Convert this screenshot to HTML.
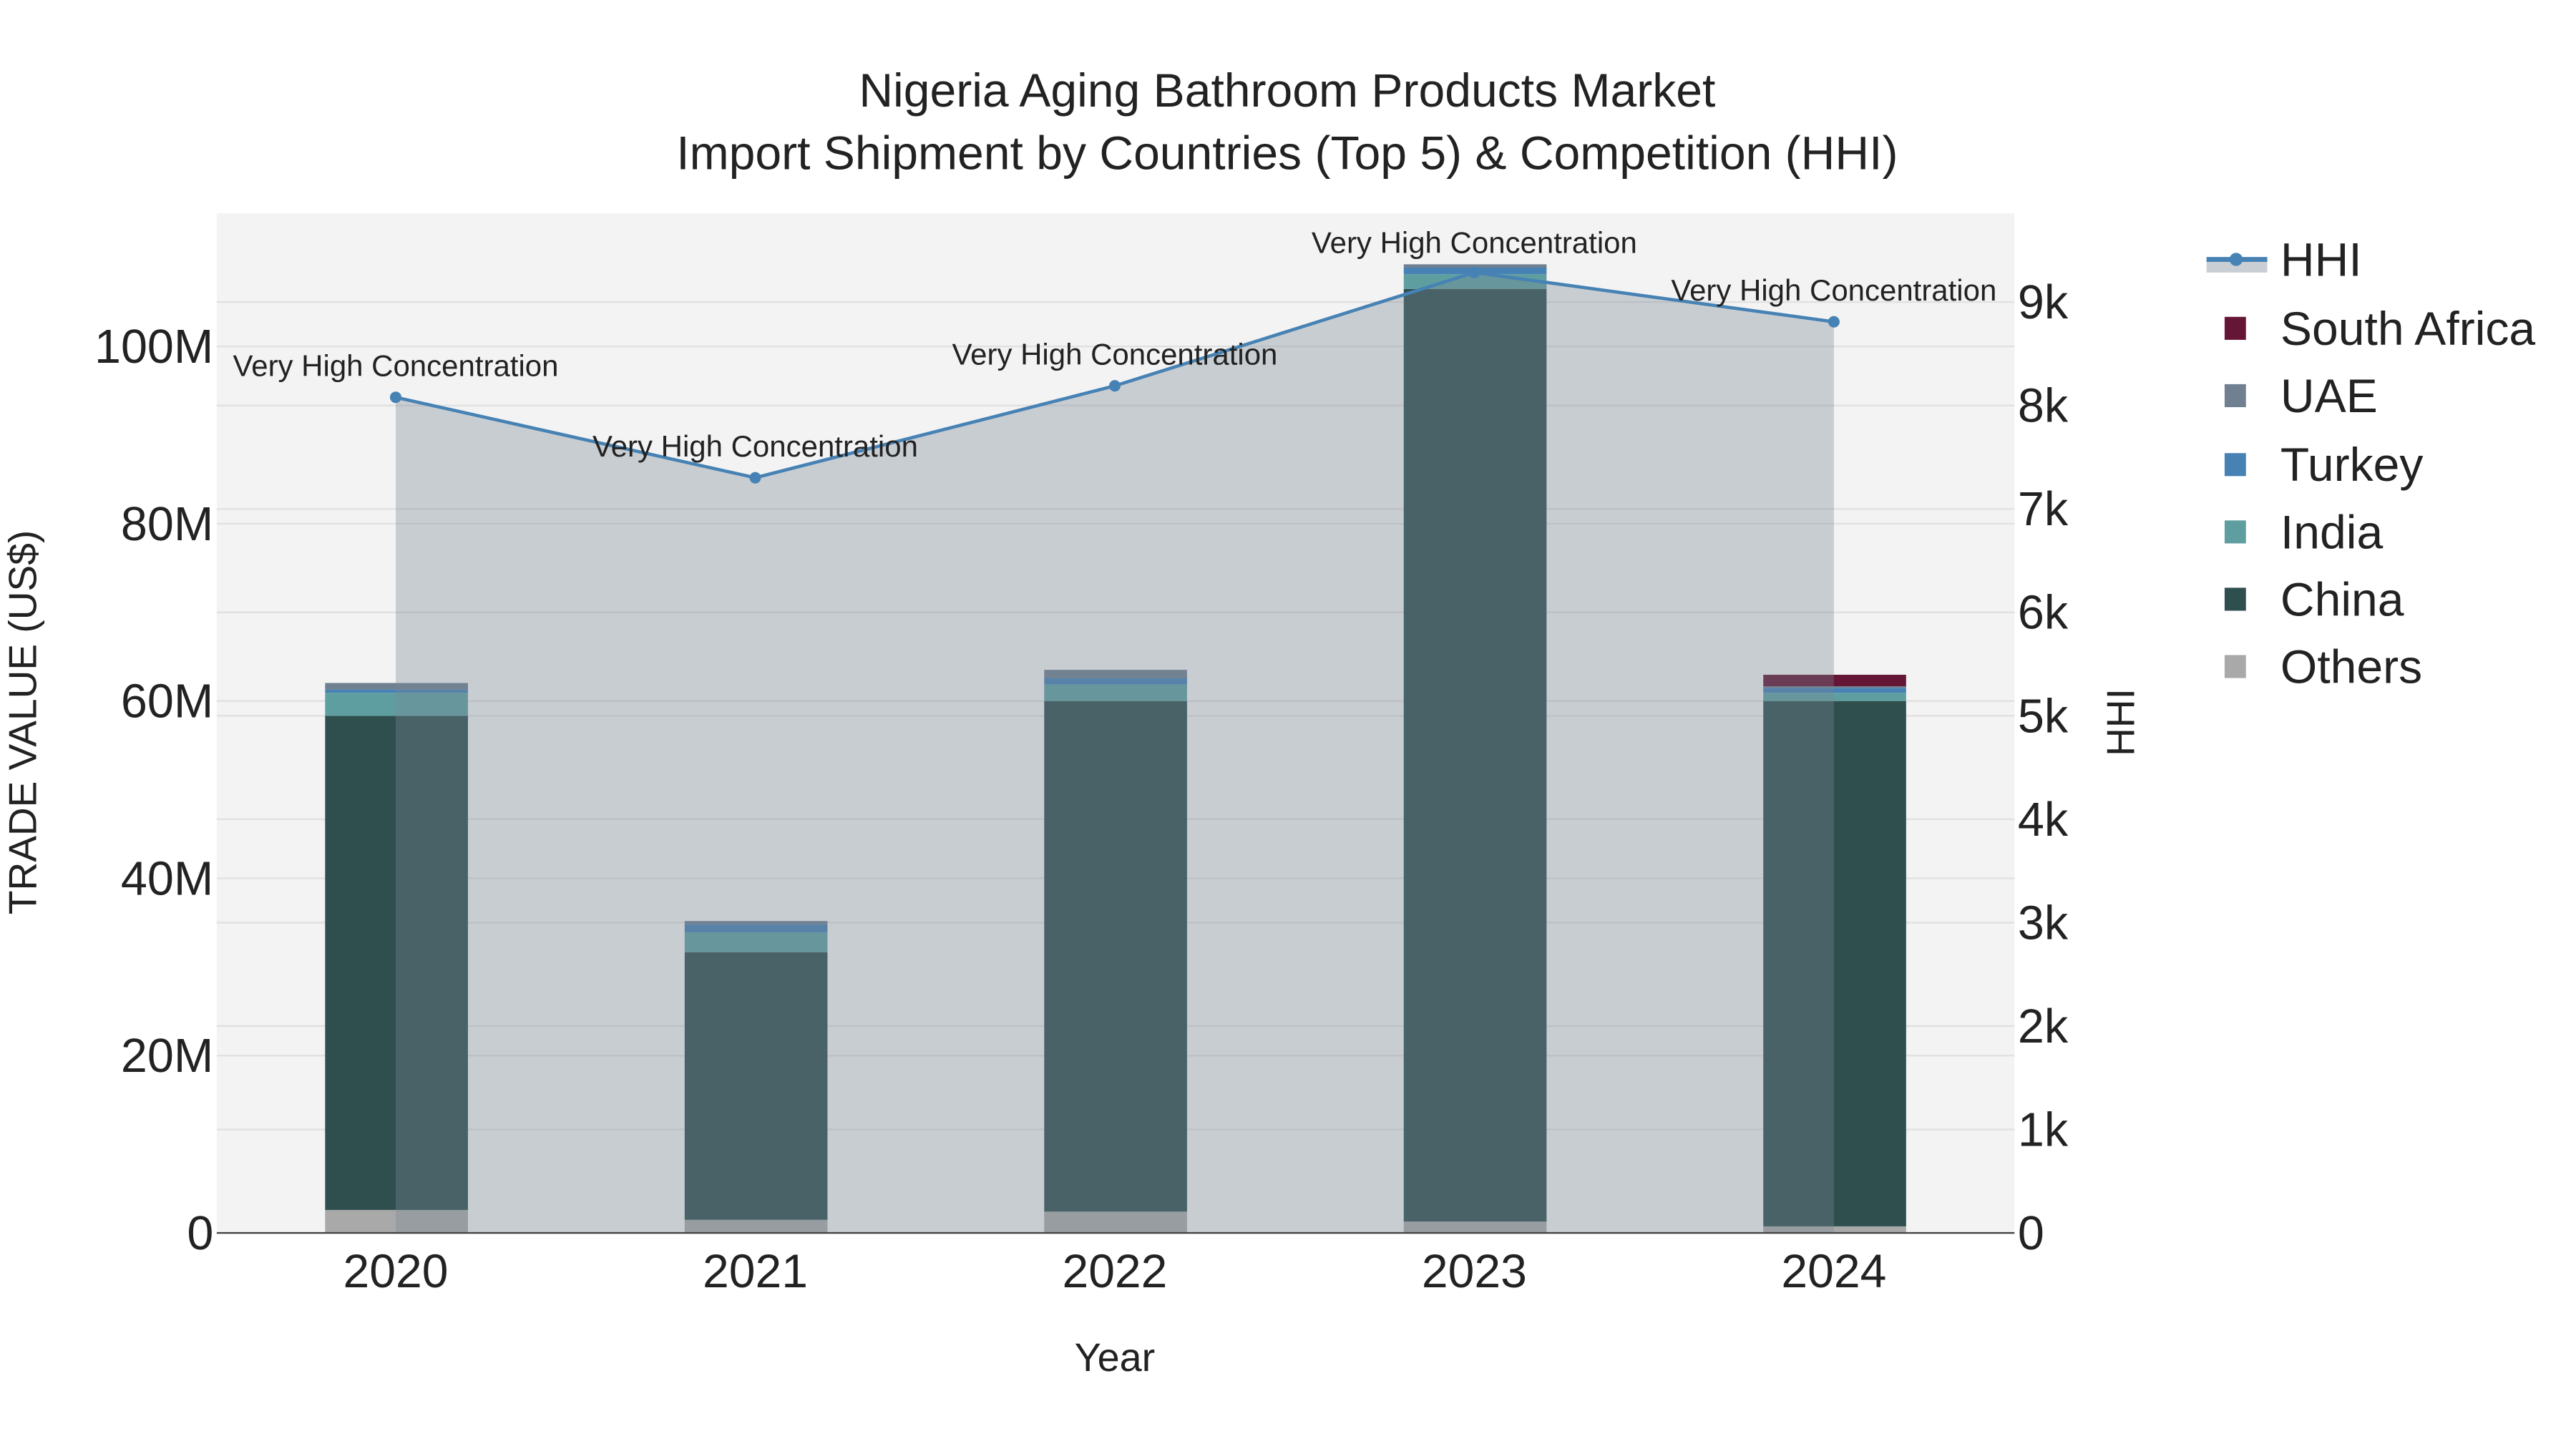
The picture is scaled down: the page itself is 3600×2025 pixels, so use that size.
<!DOCTYPE html>
<html><head><meta charset="utf-8"><style>html,body{margin:0;padding:0;background:#fff}svg{display:block}text{font-family:"Liberation Sans",sans-serif;fill:#222}</style></head><body>
<svg width="3600" height="2025" viewBox="0 0 1569 882.6" xmlns="http://www.w3.org/2000/svg">
<rect width="1569" height="882.6" fill="#fff"/>
<rect x="132" y="130" width="1095" height="621" fill="#f3f3f3"/>
<g stroke="#e0e0e0" stroke-width="1">
<line x1="132" x2="1227" y1="643" y2="643"/><line x1="132" x2="1227" y1="535" y2="535"/><line x1="132" x2="1227" y1="427" y2="427"/><line x1="132" x2="1227" y1="319" y2="319"/><line x1="132" x2="1227" y1="211" y2="211"/>
<line x1="132" x2="1227" y1="688" y2="688"/><line x1="132" x2="1227" y1="625" y2="625"/><line x1="132" x2="1227" y1="562" y2="562"/><line x1="132" x2="1227" y1="499" y2="499"/><line x1="132" x2="1227" y1="436" y2="436"/><line x1="132" x2="1227" y1="373" y2="373"/><line x1="132" x2="1227" y1="310" y2="310"/><line x1="132" x2="1227" y1="247" y2="247"/><line x1="132" x2="1227" y1="184" y2="184"/>
</g>
<g>
<rect x="198" y="737" width="87" height="14" fill="#a9a9a9"/><rect x="198" y="436" width="87" height="301" fill="#2f4f4f"/><rect x="198" y="422" width="87" height="14" fill="#5f9ea0"/><rect x="198" y="420" width="87" height="2" fill="#4682b4"/><rect x="198" y="416" width="87" height="4" fill="#708090"/>
<rect x="417" y="743" width="87" height="8" fill="#a9a9a9"/><rect x="417" y="580" width="87" height="163" fill="#2f4f4f"/><rect x="417" y="568" width="87" height="12" fill="#5f9ea0"/><rect x="417" y="563" width="87" height="5" fill="#4682b4"/><rect x="417" y="561" width="87" height="2" fill="#708090"/>
<rect x="636" y="738" width="87" height="13" fill="#a9a9a9"/><rect x="636" y="427" width="87" height="311" fill="#2f4f4f"/><rect x="636" y="417" width="87" height="10" fill="#5f9ea0"/><rect x="636" y="413" width="87" height="4" fill="#4682b4"/><rect x="636" y="408" width="87" height="5" fill="#708090"/>
<rect x="855" y="744" width="87" height="7" fill="#a9a9a9"/><rect x="855" y="176" width="87" height="568" fill="#2f4f4f"/><rect x="855" y="167" width="87" height="9" fill="#5f9ea0"/><rect x="855" y="163" width="87" height="4" fill="#4682b4"/><rect x="855" y="161" width="87" height="2" fill="#708090"/>
<rect x="1074" y="747" width="87" height="4" fill="#a9a9a9"/><rect x="1074" y="427" width="87" height="320" fill="#2f4f4f"/><rect x="1074" y="422" width="87" height="5" fill="#5f9ea0"/><rect x="1074" y="419" width="87" height="3" fill="#4682b4"/><rect x="1074" y="418" width="87" height="1" fill="#708090"/><rect x="1074" y="411" width="87" height="7" fill="#651535"/>
</g>
<polygon points="241,751 241,242 460,291 679,235 898,166 1117,196 1117,751" fill="rgba(120,134,148,0.35)"/>
<line x1="132" x2="1227" y1="751" y2="751" stroke="#444" stroke-width="1"/>
<polyline points="241,242 460,291 679,235 898,166 1117,196" fill="none" stroke="#4682b4" stroke-width="2"/>
<g fill="#4682b4"><circle cx="241" cy="242" r="3.5"/><circle cx="460" cy="291" r="3.5"/><circle cx="679" cy="235" r="3.5"/><circle cx="898" cy="166" r="3.5"/><circle cx="1117" cy="196" r="3.5"/></g>
<g font-size="18.3" text-anchor="middle">
<text x="241" y="229">Very High Concentration</text><text x="460" y="278">Very High Concentration</text><text x="679" y="222">Very High Concentration</text><text x="898" y="154">Very High Concentration</text><text x="1117" y="183">Very High Concentration</text>
</g>
<g font-size="28.8" text-anchor="middle">
<text x="784" y="65">Nigeria Aging Bathroom Products Market</text>
<text x="784" y="103">Import Shipment by Countries (Top 5) &amp; Competition (HHI)</text>
</g>
<g font-size="29" text-anchor="end">
<text x="130" y="761">0</text><text x="130" y="653">20M</text><text x="130" y="545">40M</text><text x="130" y="437">60M</text><text x="130" y="329">80M</text><text x="130" y="221">100M</text>
</g>
<g font-size="29">
<text x="1229" y="761">0</text><text x="1229" y="698">1k</text><text x="1229" y="635">2k</text><text x="1229" y="572">3k</text><text x="1229" y="509">4k</text><text x="1229" y="446">5k</text><text x="1229" y="383">6k</text><text x="1229" y="320">7k</text><text x="1229" y="257">8k</text><text x="1229" y="194">9k</text>
</g>
<g font-size="28.8" text-anchor="middle">
<text x="241" y="784">2020</text><text x="460" y="784">2021</text><text x="679" y="784">2022</text><text x="898" y="784">2023</text><text x="1117" y="784">2024</text>
</g>
<text x="679" y="835" font-size="24.3" text-anchor="middle">Year</text>
<text transform="translate(22,440) rotate(-90)" font-size="24" text-anchor="middle">TRADE VALUE (US$)</text>
<text transform="translate(1300,440) rotate(-90)" font-size="24" text-anchor="middle">HHI</text>
<rect x="1344" y="158" width="37" height="8" fill="#c9ced5"/>
<line x1="1344" x2="1381" y1="158" y2="158" stroke="#4682b4" stroke-width="3"/><circle cx="1362" cy="158" r="4" fill="#4682b4"/>
<g font-size="28.8">
<text x="1389" y="168">HHI</text><text x="1389" y="210">South Africa</text><text x="1389" y="251">UAE</text><text x="1389" y="293">Turkey</text><text x="1389" y="334">India</text><text x="1389" y="375">China</text><text x="1389" y="416">Others</text>
</g>
<rect x="1355" y="193" width="13" height="14" fill="#651535"/>
<rect x="1355" y="234" width="13" height="14" fill="#708090"/>
<rect x="1355" y="276" width="13" height="14" fill="#4682b4"/>
<rect x="1355" y="317" width="13" height="14" fill="#5f9ea0"/>
<rect x="1355" y="358" width="13" height="14" fill="#2f4f4f"/>
<rect x="1355" y="399" width="13" height="14" fill="#a9a9a9"/>
</svg>
</body></html>
